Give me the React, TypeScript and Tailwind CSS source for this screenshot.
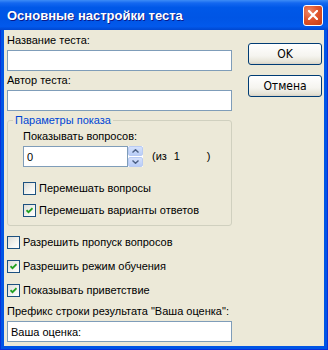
import React from 'react';

const font = { fontFamily: '"Liberation Sans", Arial, sans-serif' };

const TextBox = ({ value = '', className = '' }: { value?: string; className?: string }) => (
  <input
    readOnly
    defaultValue={value}
    className={`h-[21px] border border-[#7f9db9] bg-white pl-[3px] text-[11px] text-black outline-none ${className}`}
  />
);

const CheckBox = ({ checked, label }: { checked?: boolean; label: string }) => (
  <label className="flex items-center gap-[3px] h-[13px]">
    <span className="w-[13px] h-[13px] shrink-0 border border-[#1c5180] bg-[linear-gradient(135deg,#dcdcd7_0%,#f4f4f0_60%,#ffffff_100%)] flex items-center justify-center">
      {checked && (
        <svg width="7" height="7" viewBox="0 0 7 7">
          <path d="M0.5 3.2 L2.5 5.2 L6.5 1.2" fill="none" stroke="#21a121" strokeWidth="1.8" />
        </svg>
      )}
    </span>
    <span>{label}</span>
  </label>
);

const XpButton = ({ children }: { children: React.ReactNode }) => (
  <button
    className="w-[74px] h-[22px] rounded-[3px] border border-[#003c74] bg-[linear-gradient(to_bottom,#ffffff_0%,#f5f4ef_60%,#e6e3d6_90%,#d6d0c5_100%)] text-[12px] text-black flex items-center justify-center"
    style={{ fontFamily: '"Liberation Sans Narrow", "DejaVu Sans Condensed", "Liberation Sans", sans-serif' }}
  >
    {children}
  </button>
);

const SpinArrow = ({ up }: { up?: boolean }) => (
  <span className="w-[15px] h-[10px] rounded-[2px] border border-[#b9cbf3] bg-[linear-gradient(to_bottom,#d5e1fc,#b9cdf7)] flex items-center justify-center">
    <svg width="7" height="4" viewBox="0 0 7 4">
      <path d={up ? 'M0.5 3.5 L3.5 0.7 L6.5 3.5' : 'M0.5 0.5 L3.5 3.3 L6.5 0.5'} fill="none" stroke="#4d6185" strokeWidth="1.4" />
    </svg>
  </span>
);

export default function App() {
  return (
    <div className="w-[328px] h-[350px] flex flex-col text-[11px] leading-[13px] text-black" style={font}>
      {/* Title bar */}
      <div className="h-[30px] shrink-0 flex items-center pl-[7px] pr-[5px] bg-[linear-gradient(to_bottom,#3d8cf6_0%,#1468f0_10%,#0058e8_25%,#0055e5_60%,#0259ec_88%,#0047d0_100%)]">
        <span className="flex-1 text-white font-bold text-[13px] [text-shadow:1px_1px_#0a1a8a]">
          Основные настройки теста
        </span>
        <span className="w-[20px] h-[21px] rounded-[3px] border border-white bg-[radial-gradient(circle_at_30%_30%,#ef8a6a_0%,#e0552c_45%,#c43c14_100%)] flex items-center justify-center">
          <svg width="10" height="10" viewBox="0 0 10 10">
            <path d="M1 1 L9 9 M9 1 L1 9" stroke="white" strokeWidth="2.2" strokeLinecap="square" />
          </svg>
        </span>
      </div>

      {/* Frame + client */}
      <div className="flex-1 flex flex-col bg-[#0055e5] border-x border-b border-[#0831d9] px-[3px] pb-[3px]">
        <div className="flex-1 flex bg-[#ece9d8] pl-[3px] pt-[4px]">
          <div className="w-[225px] flex flex-col">
            <span>Название теста:</span>
            <TextBox className="mt-[3px] w-full" />
            <span className="mt-[3px]">Автор теста:</span>
            <TextBox className="mt-[3px] w-full" />

            <fieldset className="mt-[3px] border border-[#d0d0bf] rounded-[3px] pl-[15px] pt-[3px] pb-[8px]">
              <legend className="-ml-[10px] px-[2px] text-[#0046d5]">Параметры показа</legend>
              <span>Показывать вопросов:</span>
              <div className="mt-[3px] flex items-center">
                <TextBox value="0" className="w-[105px]" />
                <div className="flex flex-col gap-[1px] h-[21px] justify-center bg-white">
                  <SpinArrow up />
                  <SpinArrow />
                </div>
                <span className="ml-[9px]">(из</span>
                <span className="ml-[7px] w-[33px]">1</span>
                <span>)</span>
              </div>
              <div className="mt-[15px]">
                <CheckBox label="Перемешать вопросы" />
              </div>
              <div className="mt-[9px]">
                <CheckBox checked label="Перемешать варианты ответов" />
              </div>
            </fieldset>

            <div className="mt-[10px]">
              <CheckBox label="Разрешить пропуск вопросов" />
            </div>
            <div className="mt-[11px]">
              <CheckBox checked label="Разрешить режим обучения" />
            </div>
            <div className="mt-[11px]">
              <CheckBox checked label="Показывать приветствие" />
            </div>
            <span className="mt-[8px]">Префикс строки результата "Ваша оценка":</span>
            <TextBox value="Ваша оценка:" className="mt-[3px] w-full" />
          </div>

          <div className="ml-auto mr-[2px] mt-[9px] flex flex-col gap-[10px]">
            <XpButton>OK</XpButton>
            <XpButton>Отмена</XpButton>
          </div>
        </div>
      </div>
    </div>
  );
}
